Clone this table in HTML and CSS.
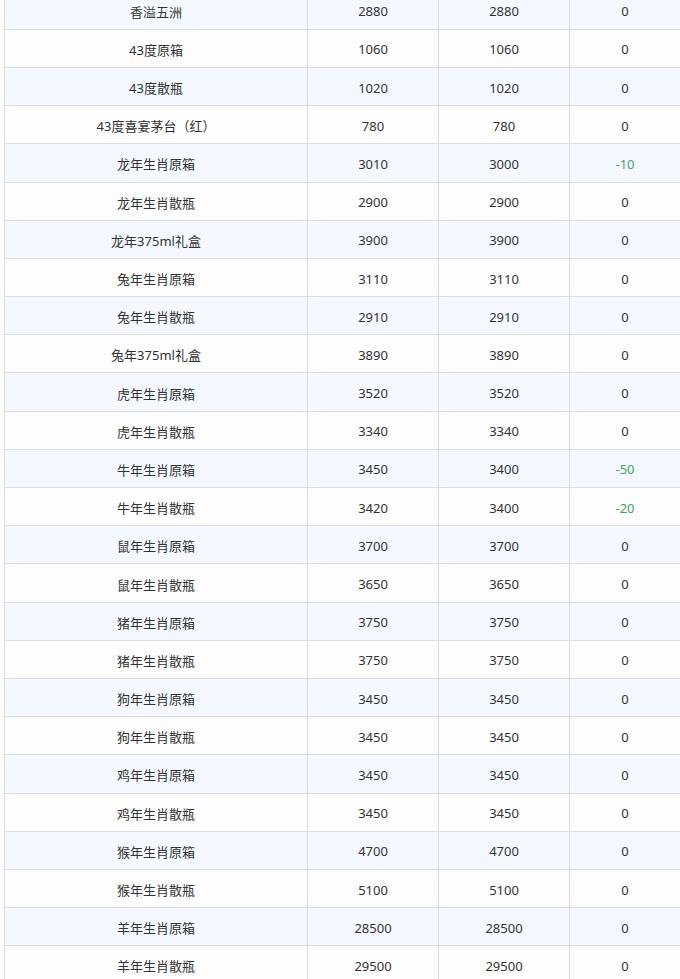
FILE: index.html
```html
<!DOCTYPE html>
<html lang="zh-CN">
<head>
<meta charset="utf-8">
<title>价格表</title>
<link rel="stylesheet" href="styles.css">
</head>
<body>
<div class="table">
  <div class="row"><div class="cell">香溢五洲</div><div class="cell">2880</div><div class="cell">2880</div><div class="cell">0</div></div>
  <div class="row"><div class="cell">43度原箱</div><div class="cell">1060</div><div class="cell">1060</div><div class="cell">0</div></div>
  <div class="row"><div class="cell">43度散瓶</div><div class="cell">1020</div><div class="cell">1020</div><div class="cell">0</div></div>
  <div class="row"><div class="cell">43度喜宴茅台（红）</div><div class="cell">780</div><div class="cell">780</div><div class="cell">0</div></div>
  <div class="row"><div class="cell">龙年生肖原箱</div><div class="cell">3010</div><div class="cell">3000</div><div class="cell down">-10</div></div>
  <div class="row"><div class="cell">龙年生肖散瓶</div><div class="cell">2900</div><div class="cell">2900</div><div class="cell">0</div></div>
  <div class="row"><div class="cell">龙年375ml礼盒</div><div class="cell">3900</div><div class="cell">3900</div><div class="cell">0</div></div>
  <div class="row"><div class="cell">兔年生肖原箱</div><div class="cell">3110</div><div class="cell">3110</div><div class="cell">0</div></div>
  <div class="row"><div class="cell">兔年生肖散瓶</div><div class="cell">2910</div><div class="cell">2910</div><div class="cell">0</div></div>
  <div class="row"><div class="cell">兔年375ml礼盒</div><div class="cell">3890</div><div class="cell">3890</div><div class="cell">0</div></div>
  <div class="row"><div class="cell">虎年生肖原箱</div><div class="cell">3520</div><div class="cell">3520</div><div class="cell">0</div></div>
  <div class="row"><div class="cell">虎年生肖散瓶</div><div class="cell">3340</div><div class="cell">3340</div><div class="cell">0</div></div>
  <div class="row"><div class="cell">牛年生肖原箱</div><div class="cell">3450</div><div class="cell">3400</div><div class="cell down">-50</div></div>
  <div class="row"><div class="cell">牛年生肖散瓶</div><div class="cell">3420</div><div class="cell">3400</div><div class="cell down">-20</div></div>
  <div class="row"><div class="cell">鼠年生肖原箱</div><div class="cell">3700</div><div class="cell">3700</div><div class="cell">0</div></div>
  <div class="row"><div class="cell">鼠年生肖散瓶</div><div class="cell">3650</div><div class="cell">3650</div><div class="cell">0</div></div>
  <div class="row"><div class="cell">猪年生肖原箱</div><div class="cell">3750</div><div class="cell">3750</div><div class="cell">0</div></div>
  <div class="row"><div class="cell">猪年生肖散瓶</div><div class="cell">3750</div><div class="cell">3750</div><div class="cell">0</div></div>
  <div class="row"><div class="cell">狗年生肖原箱</div><div class="cell">3450</div><div class="cell">3450</div><div class="cell">0</div></div>
  <div class="row"><div class="cell">狗年生肖散瓶</div><div class="cell">3450</div><div class="cell">3450</div><div class="cell">0</div></div>
  <div class="row"><div class="cell">鸡年生肖原箱</div><div class="cell">3450</div><div class="cell">3450</div><div class="cell">0</div></div>
  <div class="row"><div class="cell">鸡年生肖散瓶</div><div class="cell">3450</div><div class="cell">3450</div><div class="cell">0</div></div>
  <div class="row"><div class="cell">猴年生肖原箱</div><div class="cell">4700</div><div class="cell">4700</div><div class="cell">0</div></div>
  <div class="row"><div class="cell">猴年生肖散瓶</div><div class="cell">5100</div><div class="cell">5100</div><div class="cell">0</div></div>
  <div class="row"><div class="cell">羊年生肖原箱</div><div class="cell">28500</div><div class="cell">28500</div><div class="cell">0</div></div>
  <div class="row"><div class="cell">羊年生肖散瓶</div><div class="cell">29500</div><div class="cell">29500</div><div class="cell">0</div></div>
</div>
</body>
</html>
```

FILE: styles.css
```css
html, body {
  margin: 0;
  padding: 0;
  background: #fdfdfd;
  overflow: hidden;
}

body {
  font-family: "Noto Sans", "Noto Sans CJK SC", sans-serif;
  font-size: 13px;
  color: #333333;
}

.table {
  margin: -8.4px 0 0 4px;
  border-left: 1px solid #dddddd;
  width: 677px;
}

.row {
  display: grid;
  grid-template-columns: 303px 131px 131px 111px;
  height: 38.2px;
  background: #fdfdfd;
}

.row:nth-child(odd) {
  background: #f5f9ff;
}

.cell {
  box-sizing: border-box;
  display: flex;
  align-items: center;
  justify-content: center;
  border-right: 1px solid #dddddd;
  border-bottom: 1px solid #dddddd;
  padding-top: 2px;
}

.down {
  color: #48a359;
}
```
